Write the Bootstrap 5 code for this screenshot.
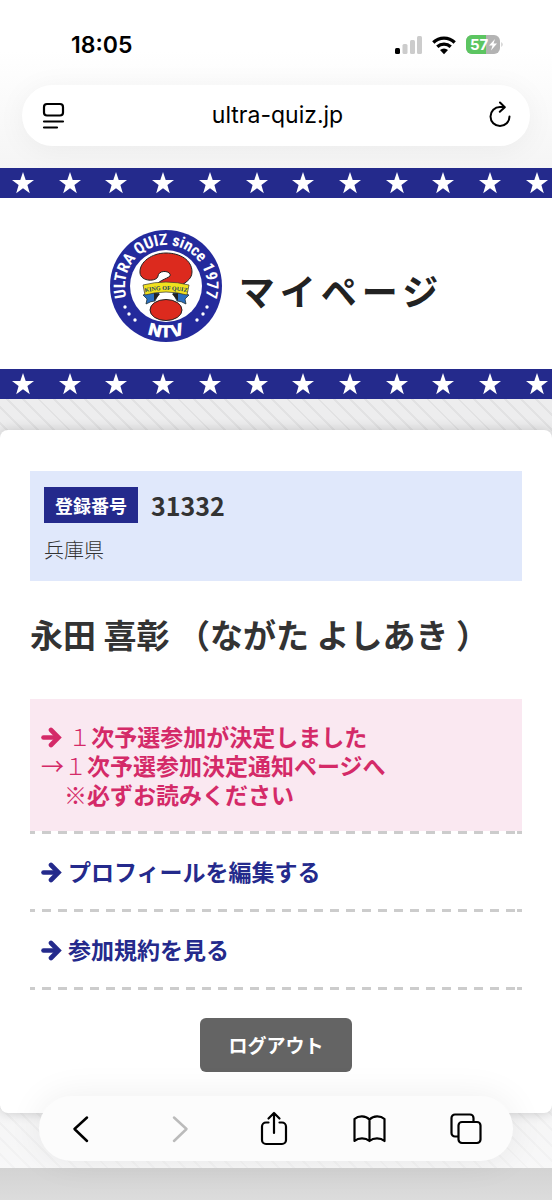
<!DOCTYPE html>
<html lang="ja">
<head>
<meta charset="utf-8">
<meta name="viewport" content="width=device-width, initial-scale=1">
<title>マイページ</title>
<link href="https://cdn.jsdelivr.net/npm/bootstrap@5.3.0/dist/css/bootstrap.min.css" rel="stylesheet">
<style>
:root { --navy: #242a8c; --pink: #d42a68; }
body { font-family: "Noto Sans CJK JP", sans-serif; color: #333; background: #fff; overflow-x: hidden; }
.ui-font { font-family: Inter, "Liberation Sans", sans-serif; color: #000; }
.browser-top { background: linear-gradient(#fff 30%, #f5f5f5); padding-bottom: 22px; }
.status { padding: 28px 48px 0 71px; height: 85px; line-height: 34px; }
.status time { font-size: 23px; font-weight: 600; }
.urlbar { margin: 0 22px; padding: 0 17px 0 18px; height: 61px; border-radius: 31px; background: #fff; box-shadow: 0 4px 30px rgba(0,0,0,.05); }
.urlbar a { font-size: 23px; color: #000; }
.icon-btn { border: 0; background: none; padding: 0; line-height: 0; color: #000; }
.icon-btn:disabled { color: #bbb; }
.stars { background: var(--navy); height: 30px; padding: 0 4px 0 12px; }
.masthead { height: 171px; gap: 16px; }
.masthead h1 { font-size: 36px; letter-spacing: 5px; color: #222; line-height: 48px; padding-top: 12px; }
.striped { background: linear-gradient(rgba(255,255,255,0) 70%, rgba(255,255,255,.6)), repeating-linear-gradient(45deg, #ededee 0 9px, #e2e2e3 9px 11px); padding: 31px 0 55px; }
.sheet { background: #fff; border-radius: 8px; padding: 41px 30px; box-shadow: 0 0 12px rgba(0,0,0,.18); }
.entry { background: #e0e8fb; padding: 16px 14px; }
.tag { background: var(--navy); color: #fff; font-size: 18px; font-weight: 700; line-height: 36px; padding: 0 11px; }
.number { font-size: 25px; font-weight: 700; line-height: 36px; margin-left: 13px; }
.pref { font-size: 20px; font-weight: 300; line-height: 30px; margin-top: 12px; }
.person { font-size: 33px; font-weight: 700; line-height: 48px; margin: 29px 0 41px; white-space: nowrap; }
.menu-row a { display: flex; gap: 6px; padding: 23px 11px 26px; font-size: 23px; line-height: 29px; font-weight: 700; color: var(--navy); text-decoration: none; }
.menu-row svg { flex: none; margin-top: 5px; }
.menu-row::after { content: ""; display: block; height: 3px; margin-top: -3px; background: linear-gradient(#ccc, #ccc) right / 5px 100% no-repeat, repeating-linear-gradient(90deg, #ccc 0 5px, #fff 5px 12px, #ccc 12px 16px); }
.menu-row a.notice { display: block; color: var(--pink); background: #fae8f1; padding: 23px 11px 25px; }
.notice svg { margin: -5px 1px 0 0; }
.logout { width: 152px; height: 54px; background: #646464; color: #fff; font-size: 19px; font-weight: 700; border-radius: 6px; margin-top: 28px; }
.logout:hover { background: #555; color: #fff; }
.page-end { height: 32px; background: linear-gradient(#d3d3d3, #dcdcdc); }
.toolbar { left: 39px; right: 39px; bottom: 39px; height: 65px; border-radius: 33px; padding: 0 31px 0 26px; background: #fcfcfc; box-shadow: 0 0 36px rgba(0,0,0,.07); }
</style>
</head>
<body>
<svg width="0" height="0" class="position-absolute" aria-hidden="true">
  <symbol id="star" viewBox="0 0 22 22"><path fill="#fff" d="M11 0l2.700 7.900H22l-6.600 5.100 2.400 8.200L11 16.300l-6.800 4.900 2.400-8.200L0 7.900h8.300z"/></symbol>
  <symbol id="arrow" viewBox="0 0 21 21"><path fill="none" stroke="currentColor" stroke-width="4.600" stroke-linecap="round" stroke-linejoin="miter" d="M10 3 17.500 10.500 10 18"/><path stroke="currentColor" stroke-width="4.600" stroke-linecap="round" d="M2.500 10.500H16"/></symbol>
</svg>

<header class="browser-top ui-font">
  <div class="status d-flex justify-content-between">
    <time>18:05</time>
    <svg width="109" height="34" viewBox="0 0 109 34" role="img" aria-label="電波 1、Wi-Fi、バッテリー 57%">
      <rect x="0" y="20" width="5" height="6" rx="1.500"/>
      <g fill="#ccc"><rect x="7.500" y="16" width="5" height="10" rx="1.500"/><rect x="15" y="12" width="5" height="14" rx="1.500"/><rect x="22" y="8" width="5" height="18" rx="1.500"/></g>
      <g fill="none" stroke="#000" stroke-width="3.300"><path d="M38.300 14.500a15.500 15.500 0 0 1 21.400 0"/><path d="M42.300 18.700a9.800 9.800 0 0 1 13.400 0"/></g>
      <path d="M45 22a6 6 0 0 1 8 0l-4 4.200z"/>
      <clipPath id="batt"><rect x="71" y="7" width="34" height="19" rx="6"/></clipPath>
      <g clip-path="url(#batt)"><path fill="#b3b3b3" d="M71 7h34v19H71z"/><path fill="#5cc561" d="M71 7h20v19H71z"/></g>
      <path fill="#b3b3b3" d="M106.500 14q2 2.500 0 5z"/>
      <text x="75" y="22" font-size="15" font-weight="700" fill="#fff">57</text>
      <path fill="#fff" d="M100 11l-6 6.500h3.500L96 22.500l6-7h-3.500z"/>
    </svg>
  </div>
  <div class="urlbar d-flex align-items-center justify-content-between">
    <button class="icon-btn" aria-label="ページメニュー"><svg width="28" height="30" viewBox="0 0 28 30" fill="none" stroke="currentColor" stroke-width="2.200"><rect x="4" y="3" width="19" height="11.500" rx="3"/><path d="M4 20.500h19M4 26.500H17" stroke-linecap="round"/></svg></button>
    <a href="#" class="text-decoration-none">ultra-quiz.jp</a>
    <button class="icon-btn" aria-label="再読み込み"><svg width="26" height="30" viewBox="0 0 26 30" fill="none" stroke="currentColor" stroke-width="2" stroke-linecap="round" stroke-linejoin="round"><path d="M22.500 15.500A9.500 9.500 0 1 1 13 6h4M13 1.500l4.800 4.700-5 4.600"/></svg></button>
  </div>
</header>

<div class="stars d-flex justify-content-between align-items-center" aria-hidden="true">
  <svg width="22" height="22"><use href="#star"/></svg><svg width="22" height="22"><use href="#star"/></svg><svg width="22" height="22"><use href="#star"/></svg><svg width="22" height="22"><use href="#star"/></svg><svg width="22" height="22"><use href="#star"/></svg><svg width="22" height="22"><use href="#star"/></svg><svg width="22" height="22"><use href="#star"/></svg><svg width="22" height="22"><use href="#star"/></svg><svg width="22" height="22"><use href="#star"/></svg><svg width="22" height="22"><use href="#star"/></svg><svg width="22" height="22"><use href="#star"/></svg><svg width="22" height="22"><use href="#star"/></svg>
</div>

<div class="masthead d-flex align-items-center justify-content-center">
  <svg width="114" height="114" viewBox="-57 -57 114 114" class="flex-shrink-0 mt-1" role="img" aria-label="ULTRA QUIZ since 1977 NTV">
    <circle r="56" fill="#242a9c"/>
    <circle r="36" fill="#fff"/>
    <path id="ring" fill="none" d="M-33.600 23.500A41 41 0 1 1 33.600 23.500"/>
    <path id="ring-low" fill="none" d="M-38 34.800A51.500 51.500 0 0 0 38 34.800"/>
    <g fill="#fff" font-weight="700">
      <text font-size="16" font-family="'Liberation Sans Narrow', 'Roboto Condensed', 'DejaVu Sans Condensed', sans-serif"><textPath href="#ring" startOffset="50%" text-anchor="middle">ULTRA QUIZ since 1977</textPath></text>
      <text font-size="17" font-weight="900" font-family="Inter, sans-serif"><textPath href="#ring-low" startOffset="50%" text-anchor="middle">NTV</textPath></text>
      <circle cx="-41" cy="21" r="1.700"/><circle cx="-37" cy="28" r="1.700"/><circle cx="-31" cy="34" r="1.700"/>
      <circle cx="41" cy="21" r="1.700"/><circle cx="37" cy="28" r="1.700"/><circle cx="31" cy="34" r="1.700"/>
    </g>
    <g fill="#dc2a1e" stroke="#222" stroke-width="1">
      <path d="M-26-13C-27-24-14-33 0-33S26-26 26-14C26-6 18-3 12 2H-11C-10-5 1-7 4-10C6-15-7-17-8-10C-9-4-25-4-26-13Z"/>
      <ellipse cx="0" cy="24" rx="16" ry="10.500"/>
    </g>
    <path fill="#2a6fc0" stroke="#122" stroke-width=".7" d="M-16 7l-7 2 4 4-1 5q5-3 9-3l4-8zM16 7l7 2-4 4 1 5q-5-3-9-3l-4-8z"/>
    <path fill="#222" d="M-12 7v8l6-7zM12 7v8l-6-7z"/>
    <path id="ribbon" fill="none" d="M-26 7.500Q0 .5 26 7.500"/>
    <path fill="#f1e11e" stroke="#333" stroke-width=".7" d="M-23-1Q0-7 23-1L21 9Q0 3-21 9Z"/>
    <text font-size="6" font-weight="700" font-family="'Liberation Serif', serif" fill="#123b66"><textPath href="#ribbon" startOffset="50%" text-anchor="middle">KING OF QUIZ</textPath></text>
  </svg>
  <h1 class="fw-bold m-0">マイページ</h1>
</div>

<div class="stars d-flex justify-content-between align-items-center" aria-hidden="true">
  <svg width="22" height="22"><use href="#star"/></svg><svg width="22" height="22"><use href="#star"/></svg><svg width="22" height="22"><use href="#star"/></svg><svg width="22" height="22"><use href="#star"/></svg><svg width="22" height="22"><use href="#star"/></svg><svg width="22" height="22"><use href="#star"/></svg><svg width="22" height="22"><use href="#star"/></svg><svg width="22" height="22"><use href="#star"/></svg><svg width="22" height="22"><use href="#star"/></svg><svg width="22" height="22"><use href="#star"/></svg><svg width="22" height="22"><use href="#star"/></svg><svg width="22" height="22"><use href="#star"/></svg>
</div>

<div class="striped">
  <main class="sheet">
    <section class="entry">
      <div class="d-flex"><span class="tag">登録番号</span><span class="number">31332</span></div>
      <div class="pref">兵庫県</div>
    </section>
    <h2 class="person">永田 喜彰 （ながた よしあき ）</h2>
    <nav>
      <div class="menu-row"><a href="#" class="notice"><svg width="21" height="21"><use href="#arrow"/></svg> <span class="fw-light">１</span>次予選参加が決定しました<br><span class="fw-normal">→</span><span class="fw-light">１</span>次予選参加決定通知ページへ<br>　<span class="fw-light">※</span>必ずお読みください</a></div>
      <div class="menu-row"><a href="#"><svg width="21" height="21"><use href="#arrow"/></svg>プロフィールを編集する</a></div>
      <div class="menu-row"><a href="#"><svg width="21" height="21"><use href="#arrow"/></svg>参加規約を見る</a></div>
    </nav>
    <div class="text-center"><button class="btn logout p-0">ログアウト</button></div>
  </main>
</div>
<div class="page-end"></div>

<nav class="toolbar position-fixed d-flex align-items-center justify-content-between" aria-label="ブラウザ">
  <button class="icon-btn" aria-label="戻る"><svg width="32" height="36" viewBox="0 0 32 36" fill="none" stroke="currentColor" stroke-width="2.500" stroke-linecap="round" stroke-linejoin="round"><path d="M22 6.500 9.500 18 22 30"/></svg></button>
  <button class="icon-btn" aria-label="進む" disabled><svg width="32" height="36" viewBox="0 0 32 36" fill="none" stroke="currentColor" stroke-width="2.500" stroke-linecap="round" stroke-linejoin="round"><path d="M13 6.500 25.500 18 13 30"/></svg></button>
  <button class="icon-btn" aria-label="共有"><svg width="32" height="36" viewBox="0 0 32 36" fill="none" stroke="currentColor" stroke-width="2.200" stroke-linecap="round" stroke-linejoin="round"><path d="M11.500 11.500H9a4 4 0 0 0-4 4V29a4 4 0 0 0 4 4h16a4 4 0 0 0 4-4V15.500a4 4 0 0 0-4-4h-2.500M17 22V2M11.500 7.500 17 2l5.500 5.500"/></svg></button>
  <button class="icon-btn" aria-label="ブックマーク"><svg width="34" height="36" viewBox="0 0 34 36" fill="none" stroke="currentColor" stroke-width="2.200" stroke-linejoin="round"><path d="M17.500 8.500C13.500 4.300 6.500 4.300 2.500 8v22c4-3.500 11-3.500 15 0 4-3.500 11-3.500 15 0V8c-4-3.700-11-3.700-15 .5zM17.500 8.500V30"/></svg></button>
  <button class="icon-btn" aria-label="タブ"><svg width="32" height="36" viewBox="0 0 32 36" fill="none" stroke="currentColor" stroke-width="2.200"><rect x="8.500" y="11" width="22" height="21" rx="3.500"/><path d="M8.500 25.500H5A3.500 3.500 0 0 1 1.500 22V7A3.500 3.500 0 0 1 5 3.500h15A3.500 3.500 0 0 1 23.500 7v4"/></svg></button>
</nav>
<script src="https://cdn.jsdelivr.net/npm/bootstrap@5.3.0/dist/js/bootstrap.bundle.min.js"></script>
</body>
</html>
